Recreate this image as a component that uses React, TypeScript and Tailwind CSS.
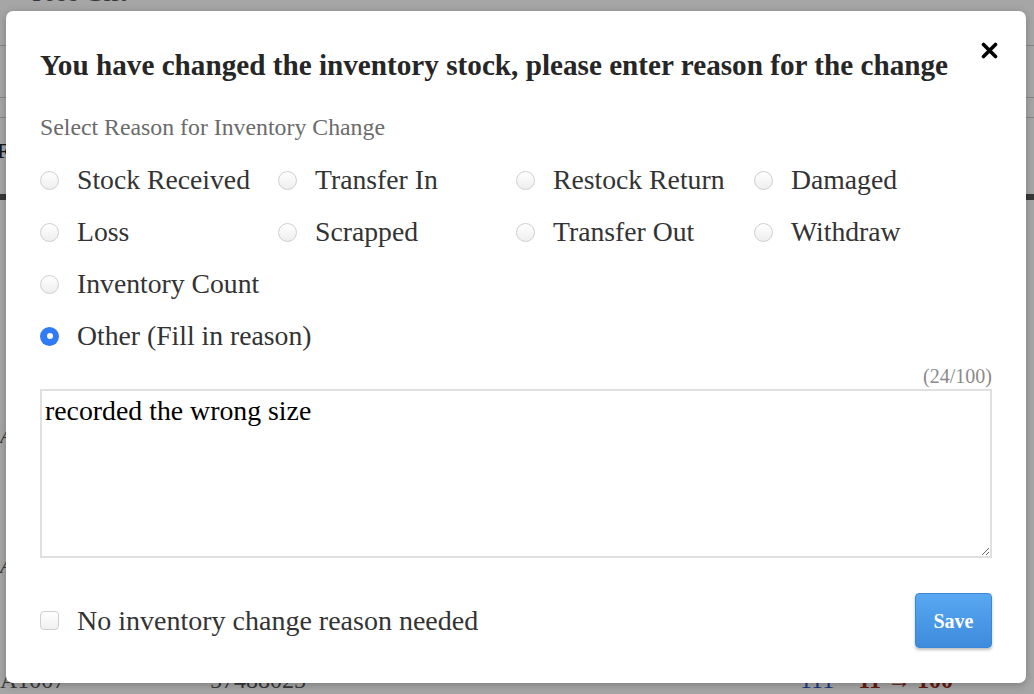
import { useState } from "react";

const reasons = [
  "Stock Received",
  "Transfer In",
  "Restock Return",
  "Damaged",
  "Loss",
  "Scrapped",
  "Transfer Out",
  "Withdraw",
  "Inventory Count",
];

const Radio = ({ checked }: { checked: boolean }) =>
  checked ? (
    <span className="flex h-[19px] w-[19px] shrink-0 items-center justify-center rounded-full bg-[#2f7cf6]">
      <span className="h-[6px] w-[6px] rounded-full bg-white" />
    </span>
  ) : (
    <span className="h-[19px] w-[19px] shrink-0 rounded-full border border-[#cfcfcf] bg-gradient-to-b from-white to-[#eeeeee]" />
  );

const App = () => {
  const [selected, setSelected] = useState("Other (Fill in reason)");
  const [text, setText] = useState("recorded the wrong size");
  const [noReason, setNoReason] = useState(false);

  return (
    <div className="relative h-[694px] w-[1034px] overflow-hidden bg-white font-['Liberation_Serif',serif]">
      {/* page behind the modal */}
      <div className="flex h-full flex-col text-[#555]">
        <div className="-mt-[22px] h-[69px] pl-[32px] text-[26px] leading-[30px]">Free Gift</div>
        <div className="h-[53px] border-t border-[#ccc]" />
        <div className="h-[20px] border-t border-[#ccc]" />
        <div className="h-[78px] border-t border-[#ccc] pt-[20px] text-[22px] font-bold leading-[26px] text-[#222]">
          <span className="-ml-[4px]">F</span>
        </div>
        <div className="h-[6px] bg-[#555]" />
        <div className="h-[240px] pt-[223px] text-[22px] italic leading-[25px]">A</div>
        <div className="h-[229px] pt-[113px] text-[22px] italic leading-[25px]">A</div>
        <div className="flex items-center text-[24px] leading-[28px]">
          <span className="w-[210px]">A1007</span>
          <span className="w-[590px]">57488025</span>
          <span className="text-[#2b55c8]">111</span>
          <span className="ml-[10px] font-bold text-[#a02a1a]">- 11 → 100</span>
        </div>
      </div>

      {/* overlay */}
      <div className="absolute inset-0 bg-black/35" />

      {/* modal */}
      <div className="absolute left-[6px] top-[11px] flex h-[672px] w-[1020px] flex-col rounded-[7px] bg-white px-[34px] pt-[36px] shadow-[0_2px_8px_rgba(0,0,0,0.25)]">
        <div className="flex items-start justify-between">
          <h1 className="whitespace-nowrap text-[29.2px] font-bold leading-[36px] text-[#262626]">
            You have changed the inventory stock, please enter reason for the change
          </h1>
          <button className="mt-[-8px] mr-[-9px] p-[3px]">
            <svg width="17" height="17" viewBox="0 0 17 17">
              <path d="M2.5 2.5 L14.5 14.5 M14.5 2.5 L2.5 14.5" stroke="#000" strokeWidth="3.6" strokeLinecap="round" />
            </svg>
          </button>
        </div>

        <div className="mt-[30px] text-[23.8px] leading-[28px] text-[#6b6b6b]">Select Reason for Inventory Change</div>

        <div className="mt-[23px] grid grid-cols-[238px_238px_238px_238px] gap-y-[20px] text-[27.7px] leading-[32px] text-[#333]">
          {reasons.map((r) => (
            <label key={r} className="flex cursor-pointer items-center gap-[18px] whitespace-nowrap" onClick={() => setSelected(r)}>
              <Radio checked={selected === r} />
              <span>{r}</span>
            </label>
          ))}
          <label
            className="col-span-4 flex cursor-pointer items-center gap-[18px]"
            onClick={() => setSelected("Other (Fill in reason)")}
          >
            <Radio checked={selected === "Other (Fill in reason)"} />
            <span>Other (Fill in reason)</span>
          </label>
        </div>

        <div className="mt-[14px] text-right text-[20px] leading-[20px] text-[#8a8a8a]">(24/100)</div>
        <textarea
          value={text}
          onChange={(e) => setText(e.target.value.slice(0, 100))}
          className="mt-[3px] h-[169px] w-full shrink-0 resize border-2 border-[#e0e0e0] px-[3px] py-[3px] text-[27.8px] leading-[34px] text-black outline-none"
        />

        <div className="mt-[35px] flex items-center justify-between">
          <label className="flex cursor-pointer items-center gap-[18px] text-[28px] leading-[32px] text-[#333]" onClick={() => setNoReason(!noReason)}>
            <span
              className={
                noReason
                  ? "flex h-[19px] w-[19px] items-center justify-center rounded-[4px] bg-[#2f7cf6] text-[13px] text-white"
                  : "h-[19px] w-[19px] rounded-[4px] border border-[#cfcfcf] bg-gradient-to-b from-white to-[#f0f0f0]"
              }
            >
              {noReason ? "✓" : null}
            </span>
            <span>No inventory change reason needed</span>
          </label>
          <button className="h-[55px] w-[77px] rounded-[4px] border border-[#3a87d8] bg-gradient-to-b from-[#58a8f2] to-[#3d8bdb] text-[20px] font-bold text-white shadow-[0_2px_3px_rgba(0,0,0,0.25)]">
            Save
          </button>
        </div>
      </div>
    </div>
  );
};

export default App;
